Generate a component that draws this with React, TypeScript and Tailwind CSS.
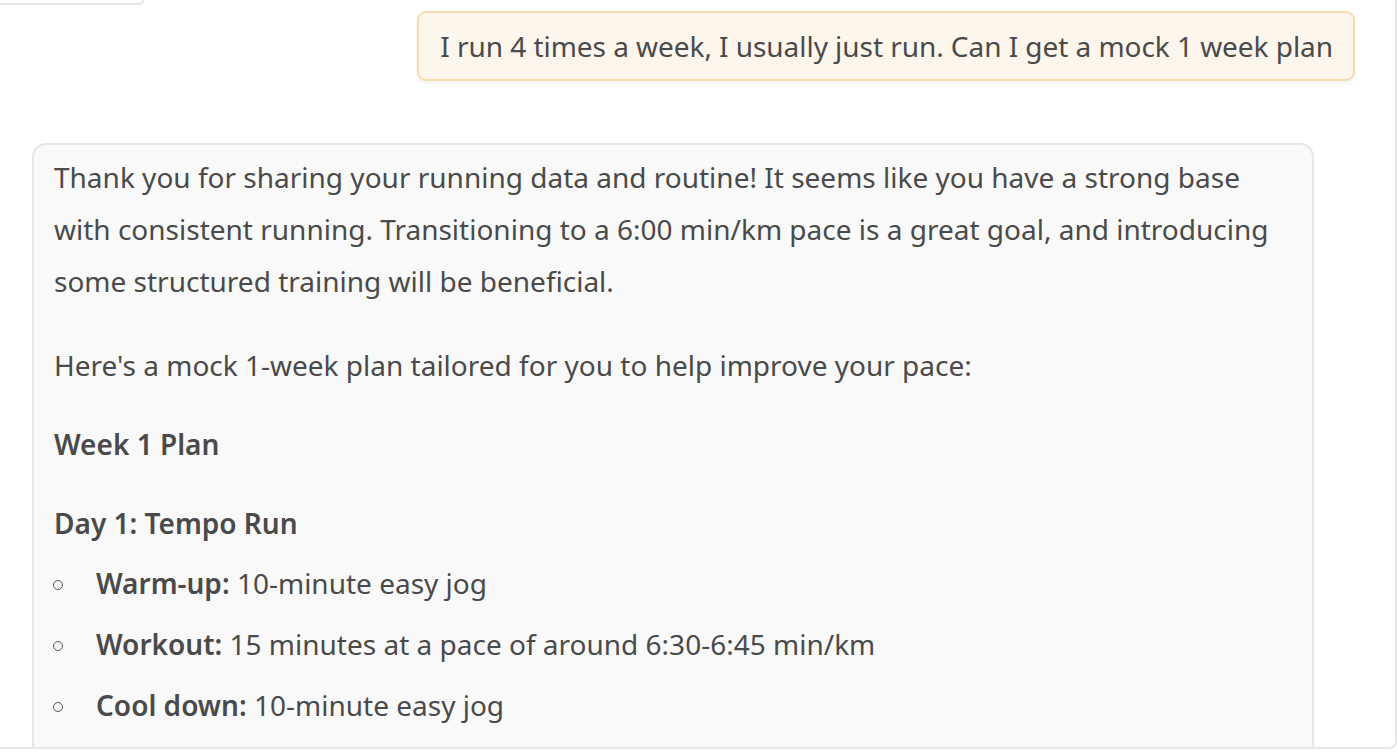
import React from "react";

function Bullet({ label, text }: { label: string; text: string }) {
  return (
    <li className="flex items-center">
      <span className="ml-[-1px] mr-[33px] mt-[3px] h-[10px] w-[10px] shrink-0 rounded-full border border-[#555555]" />
      <span>
        <strong className="font-semibold">{label}</strong> {text}
      </span>
    </li>
  );
}

export default function App() {
  return (
    <div className="h-[756px] w-[1398px] bg-white font-['Noto_Sans',sans-serif] text-[28px] leading-[52px] text-[#4a4a4a]">
      <div className="h-[749px] w-[1397px] overflow-hidden rounded-br-[7px] border-r-2 border-b-2 border-[#e6e6e6]">
        <div className="h-[5px] w-[144px] rounded-br-[6px] border-r-2 border-b-2 border-[#e6e6e6]" />

        <div className="mt-[6px] flex justify-end pr-[40px]">
          <div className="rounded-[9px] border-2 border-[#f8dcb0] bg-[#fdf6ec] py-[7px] pl-[21px] pr-[20px] tracking-[-0.05px] shadow-[0_2px_4px_rgba(0,0,0,0.06)]">
            I run 4 times a week, I usually just run. Can I get a mock 1 week plan
          </div>
        </div>

        <div className="ml-[32px] mt-[62px] w-[1282px] rounded-[14px] border-2 border-[#e6e6e6] bg-[#f9f9f9] pb-[40px] pl-[20px] pr-[20px] pt-[6px]">
          <p>
            Thank you for sharing your running data and routine! It seems like you have a strong base with consistent running. Transitioning to a 6:00 min/km pace is a great goal, and introducing some structured training will be beneficial.
          </p>
          <p className="mt-[32px]">Here's a mock 1-week plan tailored for you to help improve your pace:</p>
          <p className="mt-[27px] font-semibold">Week 1 Plan</p>
          <p className="mt-[27px] font-semibold">Day 1: Tempo Run</p>
          <ul className="mt-[8px] flex flex-col gap-[9px]">
            <Bullet label="Warm-up:" text="10-minute easy jog" />
            <Bullet label="Workout:" text="15 minutes at a pace of around 6:30-6:45 min/km" />
            <Bullet label="Cool down:" text="10-minute easy jog" />
          </ul>
        </div>
      </div>
    </div>
  );
}
